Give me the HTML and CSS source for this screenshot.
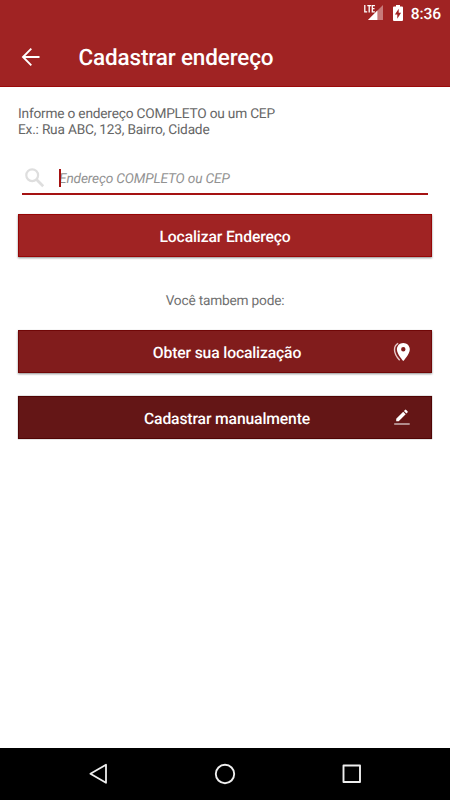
FILE: index.html
```html
<!DOCTYPE html>
<html lang="pt-BR">
<head>
<meta charset="utf-8">
<title>Cadastrar endereço</title>
<link rel="stylesheet" href="styles.css">
</head>
<body>
<div class="screen">
  <header class="header">
    <div class="status">
      <svg class="signal" width="20" height="20" viewBox="0 0 20 20">
        <path d="M19 5v15H4z" fill="#c77a7a"/>
        <path d="M13.4 10.6V20H4z" fill="#fff"/>
        <path d="M.6 5v6.4h2.6M3.3 5.7h3.9M5.2 5.7v6.3M11 5.7H8.4v5.7H11M8.4 8.5h2.2" fill="none" stroke="#a02323" stroke-width="2.6"/>
        <path d="M.8 5v6.900h2.4M3.3 5.6h3.9M5.2 5.6V12.500M10.9 5.6H8.3v6.300h2.6M8.3 8.7h2.2" fill="none" stroke="#fff" stroke-width="1.3"/>
      </svg>
      <svg class="battery" width="10" height="16" viewBox="0 0 10 16">
        <path d="M3 0h4v1.6h2q1 0 1 1V15q0 1-1 1H1q-1 0-1-1V2.600q0-1 1-1h2z" fill="#fff"/>
        <path d="M5.700 3.700 1.900 9.500h2.400v4.200l3.800-6H5.700z" fill="#a02323"/>
      </svg>
      <span class="clock">8:36</span>
    </div>
    <div class="toolbar">
      <svg class="back" width="20" height="20" viewBox="0 0 20 20" fill="none" stroke="#fff" stroke-width="1.9">
        <path d="M19.500 10H3M11.300 1.700 3 10l8.300 8.300"/>
      </svg>
      <h1 class="title">Cadastrar endereço</h1>
    </div>
  </header>
  <main class="content">
    <p class="intro">Informe o endereço COMPLETO ou um CEP<br>Ex.: Rua ABC, 123, Bairro, Cidade</p>
    <div class="search">
      <svg class="lens" width="20" height="20" viewBox="0 0 20 20" fill="none" stroke="#dedede">
        <circle cx="7.200" cy="7.200" r="5.900" stroke-width="2.200"/>
        <path d="m11.500 11.500 6.700 6.700" stroke-width="2.700"/>
      </svg>
      <span class="placeholder">Endereço COMPLETO ou CEP</span>
      <span class="caret"></span>
    </div>
    <button class="btn btn-find"><span class="label">Localizar Endereço</span></button>
    <p class="also">Você tambem pode:</p>
    <button class="btn btn-gps"><span class="label">Obter sua localização</span>
      <svg class="icon" width="18" height="20" viewBox="0 0 18 20">
        <path fill="#fff" fill-rule="evenodd" d="M10.300 1C6.600 1 3.900 3.800 3.900 7.400c0 4.500 6.400 11.600 6.400 11.600s6.500-7.100 6.500-11.600C16.800 3.800 13.900 1 10.300 1zm0 4a2.200 2.200 0 1 1 0 4.400 2.200 2.200 0 0 1 0-4.400z"/>
        <path fill="none" stroke="#e6c9c9" stroke-width="1.400" d="M5.200 1.400C2.600 2.700 1.500 5 1.500 7.700c0 3.600 2.400 7.500 5.200 10.600"/>
      </svg>
    </button>
    <button class="btn btn-manual"><span class="label">Cadastrar manualmente</span>
      <svg class="icon" width="18" height="20" viewBox="0 0 18 20">
        <path fill="#fff" d="M3.200 13.200v-2.500l7-7 2.500 2.500-7 7zM10.900 3l1.100-1.100q.6-.6 1.200 0l1.300 1.300q.6.600 0 1.200L13.400 5.500z"/>
        <path fill="#b18b8b" d="M1.200 15h15.500v2H1.200z"/>
      </svg>
    </button>
  </main>
  <nav class="navbar">
    <svg width="22" height="22" viewBox="0 0 22 22" fill="none" stroke="#eee" stroke-width="1.800" stroke-linejoin="round"><path d="M19 1.800v18L3.400 10.800z"/></svg>
    <svg width="22" height="22" viewBox="0 0 22 22" fill="none" stroke="#eee" stroke-width="1.900"><circle cx="11" cy="11" r="9.200"/></svg>
    <svg width="22" height="22" viewBox="0 0 22 22" fill="none" stroke="#eee" stroke-width="1.900" stroke-linejoin="round"><path d="M2.500 2.500h16.500v16.500h-16.500z"/></svg>
  </nav>
</div>
</body>
</html>
```
FILE: styles.css
```css
* { box-sizing: border-box; }
body { margin: 0; font-family: Roboto, sans-serif; background: #fff; text-rendering: geometricPrecision; }
h1, p { margin: 0; }
svg { display: block; flex: none; }
.screen { width: 450px; height: 800px; display: flex; flex-direction: column; overflow: hidden; }
.header { height: 87px; background: #a02323; color: #fff; border-bottom: 1px solid #9b0a0a; flex: none; }
.status { height: 27px; display: flex; align-items: flex-start; justify-content: flex-end; padding-right: 9px; }
.signal { margin-right: 9px; }
.battery { margin: 5px 8px 0 0; }
.clock { font-size: 15.6px; font-weight: 500; line-height: 28px; letter-spacing: -0.1px; }
.toolbar { height: 60px; display: flex; align-items: center; padding-left: 20px; }
.title { margin-left: 38.500px; padding-top: 2px; font-size: 22.500px; letter-spacing: -0.15px; font-weight: 500; line-height: 30px; white-space: nowrap; }
.content { flex: 1; padding: 19px 18px 0; }
.intro { font-size: 13.700px; letter-spacing: -0.2px; line-height: 16px; color: #666; white-space: nowrap; }
.search { height: 34px; margin: 23px 4px 0; border-bottom: 2px solid #a51212; display: flex; align-items: center; padding: 2px 0 0 3px; position: relative; }
.caret { position: absolute; left: 37px; top: 8px; width: 2px; height: 18px; background: #a51212; }
.placeholder { font-size: 13.700px; letter-spacing: -0.15px; font-style: italic; color: #929292; margin-left: 14px; padding-top: 2px; white-space: nowrap; }
.btn { position: relative; display: flex; align-items: center; justify-content: center; width: 414px; height: 43px; padding: 2px 0 0; border: 1px solid; color: #fff; font: 500 15.700px/20px Roboto, sans-serif; letter-spacing: -0.14px; text-rendering: inherit; box-shadow: 0 1px 2px rgba(0,0,0,.45); }
.label { color: #fff; white-space: nowrap; }
.btn-find { margin-top: 19px; background: #a02323; border-color: #960606; }
.also { margin-top: 35px; text-align: center; font-size: 13.700px; letter-spacing: -0.2px; line-height: 18px; color: #707070; }
.btn-gps { margin-top: 20px; background: #811c1c; border-color: #700707; }
.btn-manual { margin-top: 23px; background: #641616; border-color: #500404; box-shadow: 0 0 1px rgba(0,0,0,.6); }
.btn-gps, .btn-manual { padding-left: 4px; }
.icon { position: absolute; right: 20px; top: 11px; }
.navbar { height: 52px; background: #000; display: flex; align-items: center; justify-content: space-between; padding: 0 87px; flex: none; }
```
